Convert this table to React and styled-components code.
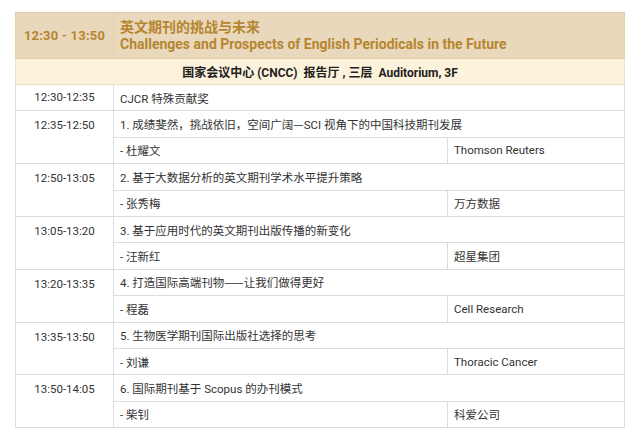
import React from 'react';
import styled, { createGlobalStyle } from 'styled-components';

const GlobalStyle = createGlobalStyle`
  html, body {
    margin: 0;
    padding: 0;
    background: #ffffff;
    font-family: Roboto, "Noto Sans CJK SC", sans-serif;
  }
`

const Page = styled.div`
  padding: 12px 16px 0 15px;
`

const Table = styled.table`
  width: 609px;
  border-collapse: collapse;
  table-layout: fixed;
  font-size: 11.5px;
  color: #333333;
  td {
    border: 1px solid #dcdcdc;
  }
`

const HeaderRow = styled.tr`
  height: 46px;
  background: #ead8bc;
  color: #b5862f;
  font-weight: 700;
  td {
    border-color: #e3cfae;
  }
`

const HeadTime = styled.td`
  text-align: center;
  font-size: 13px;
  letter-spacing: 0.2px;
`

const HeadTitle = styled.td`
  padding: 0 6px;
  font-size: 14px;
  line-height: 17px;
`

const VenueRow = styled.tr`
  height: 26px;
  background: #fdf2dc;
  td {
    border-color: #eee0c4;
    text-align: center;
    font-weight: 700;
    font-size: 12px;
    color: #222222;
  }
`

const Row = styled.tr`
  height: 26.4px;
`

const TimeCell = styled.td`
  text-align: center;
  vertical-align: ${p => (p.$top ? 'top' : 'middle')};
  padding-top: ${p => (p.$top ? '7px' : '0')};
`

const Cell = styled.td`
  padding: 0 6px;
  white-space: nowrap;
`

const Dash = styled.span`
  font-family: "Noto Sans CJK SC", sans-serif;
`

// CJK dashes should take a full character width
const withDashes = text =>
  text.split(/(—+)/).map((part, i) =>
    part.startsWith('—') ? <Dash key={i}>{part}</Dash> : part
  )

const schedule = [
  { time: '12:30-12:35', title: 'CJCR 特殊贡献奖' },
  { time: '12:35-12:50', title: '1. 成绩斐然，挑战依旧，空间广阔—SCI 视角下的中国科技期刊发展', speaker: '- 杜耀文', org: 'Thomson Reuters' },
  { time: '12:50-13:05', title: '2. 基于大数据分析的英文期刊学术水平提升策略', speaker: '- 张秀梅', org: '万方数据' },
  { time: '13:05-13:20', title: '3. 基于应用时代的英文期刊出版传播的新变化', speaker: '- 汪新红', org: '超星集团' },
  { time: '13:20-13:35', title: '4. 打造国际高端刊物——让我们做得更好', speaker: '- 程磊', org: 'Cell Research' },
  { time: '13:35-13:50', title: '5. 生物医学期刊国际出版社选择的思考', speaker: '- 刘谦', org: 'Thoracic Cancer' },
  { time: '13:50-14:05', title: '6. 国际期刊基于 Scopus 的办刊模式', speaker: '- 柴钊', org: '科爱公司' },
]

export default function App() {
  return (
    <Page>
      <GlobalStyle />
      <Table>
        <colgroup>
          <col style={{ width: 98 }} />
          <col style={{ width: 334 }} />
          <col style={{ width: 177 }} />
        </colgroup>
        <tbody>
          <HeaderRow>
            <HeadTime>12:30 - 13:50</HeadTime>
            <HeadTitle colSpan={2}>
              英文期刊的挑战与未来<br />
              Challenges and Prospects of English Periodicals in the Future
            </HeadTitle>
          </HeaderRow>
          <VenueRow>
            <td colSpan={3}>国家会议中心 (CNCC)&nbsp; 报告厅 , 三层&nbsp; Auditorium, 3F</td>
          </VenueRow>
          {schedule.map(item =>
            item.speaker ? (
              <React.Fragment key={item.time}>
                <Row>
                  <TimeCell rowSpan={2} $top>{item.time}</TimeCell>
                  <Cell colSpan={2}>{withDashes(item.title)}</Cell>
                </Row>
                <Row>
                  <Cell>{item.speaker}</Cell>
                  <Cell>{item.org}</Cell>
                </Row>
              </React.Fragment>
            ) : (
              <Row key={item.time}>
                <TimeCell>{item.time}</TimeCell>
                <Cell colSpan={2}>{item.title}</Cell>
              </Row>
            )
          )}
        </tbody>
      </Table>
    </Page>
  )
}
